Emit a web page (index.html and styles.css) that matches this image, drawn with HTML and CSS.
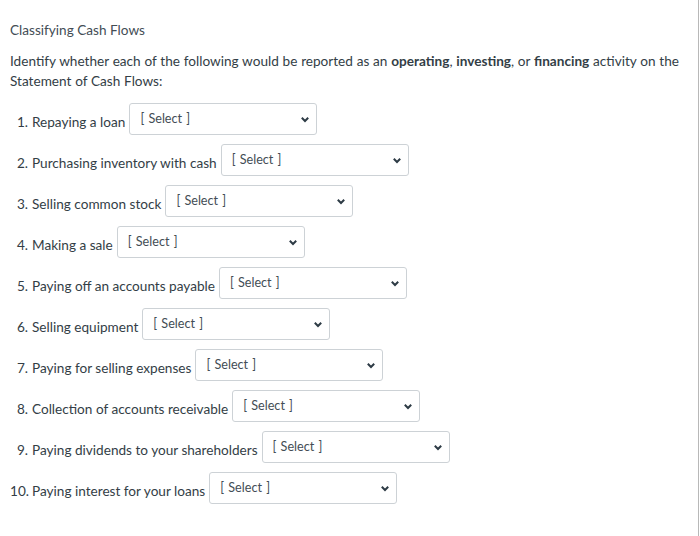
FILE: index.html
```html
<!DOCTYPE html>
<html lang="en">
<head>
<meta charset="utf-8">
<title>Classifying Cash Flows</title>
<link rel="stylesheet" href="styles.css">
</head>
<body>
<div class="page">
  <div class="title">Classifying Cash Flows</div>
  <p class="intro">Identify whether each of the following would be reported as an <b>operating</b>, <b>investing</b>, or <b>financing</b> activity on the Statement of Cash Flows:</p>
  <div class="rows">
    <div class="row"><span class="num">1.</span><span class="label">Repaying a loan</span><div class="select"><span>[ Select ]</span><svg width="10" height="7" viewBox="0 0 10 7"><path d="M1.8 1.8 L5 5 L8.2 1.8" fill="none" stroke="#2d3b45" stroke-width="2"/></svg></div></div>
    <div class="row"><span class="num">2.</span><span class="label">Purchasing inventory with cash</span><div class="select"><span>[ Select ]</span><svg width="10" height="7" viewBox="0 0 10 7"><path d="M1.8 1.8 L5 5 L8.2 1.8" fill="none" stroke="#2d3b45" stroke-width="2"/></svg></div></div>
    <div class="row"><span class="num">3.</span><span class="label">Selling common stock</span><div class="select"><span>[ Select ]</span><svg width="10" height="7" viewBox="0 0 10 7"><path d="M1.8 1.8 L5 5 L8.2 1.8" fill="none" stroke="#2d3b45" stroke-width="2"/></svg></div></div>
    <div class="row"><span class="num">4.</span><span class="label">Making a sale</span><div class="select"><span>[ Select ]</span><svg width="10" height="7" viewBox="0 0 10 7"><path d="M1.8 1.8 L5 5 L8.2 1.8" fill="none" stroke="#2d3b45" stroke-width="2"/></svg></div></div>
    <div class="row"><span class="num">5.</span><span class="label">Paying off an accounts payable</span><div class="select"><span>[ Select ]</span><svg width="10" height="7" viewBox="0 0 10 7"><path d="M1.8 1.8 L5 5 L8.2 1.8" fill="none" stroke="#2d3b45" stroke-width="2"/></svg></div></div>
    <div class="row"><span class="num">6.</span><span class="label">Selling equipment</span><div class="select"><span>[ Select ]</span><svg width="10" height="7" viewBox="0 0 10 7"><path d="M1.8 1.8 L5 5 L8.2 1.8" fill="none" stroke="#2d3b45" stroke-width="2"/></svg></div></div>
    <div class="row"><span class="num">7.</span><span class="label">Paying for selling expenses</span><div class="select"><span>[ Select ]</span><svg width="10" height="7" viewBox="0 0 10 7"><path d="M1.8 1.8 L5 5 L8.2 1.8" fill="none" stroke="#2d3b45" stroke-width="2"/></svg></div></div>
    <div class="row"><span class="num">8.</span><span class="label">Collection of accounts receivable</span><div class="select"><span>[ Select ]</span><svg width="10" height="7" viewBox="0 0 10 7"><path d="M1.8 1.8 L5 5 L8.2 1.8" fill="none" stroke="#2d3b45" stroke-width="2"/></svg></div></div>
    <div class="row"><span class="num">9.</span><span class="label">Paying dividends to your shareholders</span><div class="select"><span>[ Select ]</span><svg width="10" height="7" viewBox="0 0 10 7"><path d="M1.8 1.8 L5 5 L8.2 1.8" fill="none" stroke="#2d3b45" stroke-width="2"/></svg></div></div>
    <div class="row"><span class="num">10.</span><span class="label">Paying interest for your loans</span><div class="select"><span>[ Select ]</span><svg width="10" height="7" viewBox="0 0 10 7"><path d="M1.8 1.8 L5 5 L8.2 1.8" fill="none" stroke="#2d3b45" stroke-width="2"/></svg></div></div>
  </div>
</div>
</body>
</html>
```

FILE: styles.css
```css
html, body {
  margin: 0;
  padding: 0;
  background: #fff;
}
body {
  font-family: Lato, "Noto Sans", sans-serif;
  font-size: 13.6px;
  color: #333e46;
}
.page {
  box-sizing: border-box;
  width: 699px;
  height: 536px;
  border-right: 1px solid #b8b8b8;
  padding: 20px 10px 0 10px;
}
.title {
  line-height: 20px;
  color: #434d55;
}
.intro {
  margin: 11px 0 12px 0;
  line-height: 20px;
  word-spacing: 0.3px;
}
.intro b {
  font-weight: 700;
}
.rows {
  display: flex;
  flex-direction: column;
}
.row {
  display: flex;
  align-items: flex-start;
  height: 41px;
}
.num {
  width: 18px;
  text-align: right;
  margin-top: 9px;
  line-height: 20px;
}
.label {
  margin-left: 4px;
  margin-top: 9px;
  line-height: 20px;
}
.select {
  box-sizing: border-box;
  width: 188px;
  height: 32px;
  margin-left: 4px;
  border: 1px solid #cdd2d6;
  border-radius: 3px;
  background: #fff;
  display: flex;
  align-items: center;
  justify-content: space-between;
  padding: 0 6px 1px 10px;
  font-size: 12.6px;
  word-spacing: 1px;
  color: #434d55;
}
.select svg {
  display: block;
  margin-top: 1px;
}
```
